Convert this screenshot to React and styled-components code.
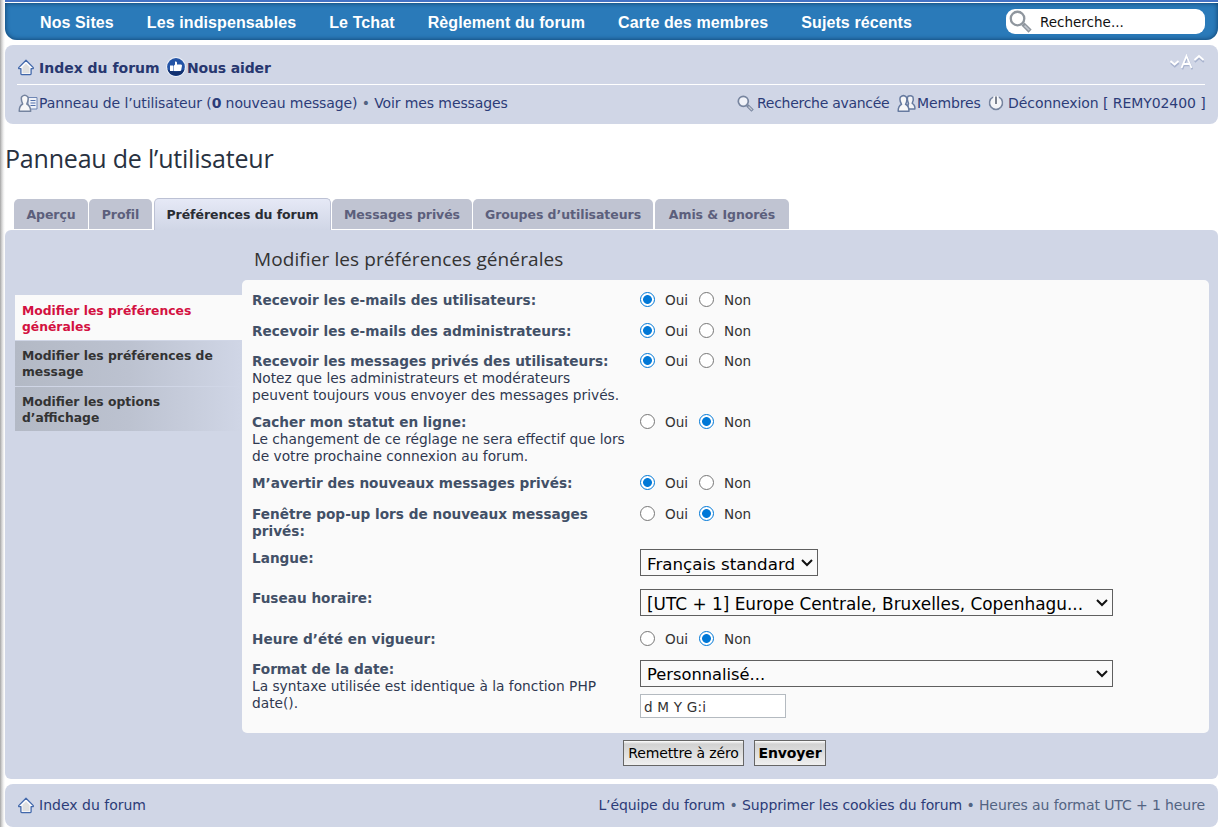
import React from 'react';
import styled, { createGlobalStyle } from 'styled-components';

const GlobalStyle = createGlobalStyle`
    * { box-sizing: border-box; }
    body {
        margin: 0;
        background: #fff;
        font-family: Verdana, "DejaVu Sans", sans-serif;
        font-size: 14px;
        color: #2f3a4a;
        overflow: hidden;
    }
    svg { flex: none; }
`;

const NAV = ['Nos Sites', 'Les indispensables', 'Le Tchat', 'Règlement du forum', 'Carte des membres', 'Sujets récents'];

const TABS = [
    { label: 'Aperçu', width: 74, gap: 1 },
    { label: 'Profil', width: 63, gap: 2 },
    { label: 'Préférences du forum', width: 177, gap: 1, active: true },
    { label: 'Messages privés', width: 140, gap: 1 },
    { label: 'Groupes d’utilisateurs', width: 180, gap: 2 },
    { label: 'Amis & Ignorés', width: 134, gap: 0 },
];

const MENU = [
    { lines: ['Modifier les préférences', 'générales'], active: true, height: 45 },
    { lines: ['Modifier les préférences de', 'message'], height: 45 },
    { lines: ['Modifier les options', 'd’affichage'], height: 44 },
];

const ROWS = [
    { title: ['Recevoir les e-mails des utilisateurs:'], value: 'oui', height: 31 },
    { title: ['Recevoir les e-mails des administrateurs:'], value: 'oui', height: 30 },
    {
        title: ['Recevoir les messages privés des utilisateurs:'],
        note: ['Notez que les administrateurs et modérateurs', 'peuvent toujours vous envoyer des messages privés.'],
        value: 'oui',
        height: 61,
    },
    {
        title: ['Cacher mon statut en ligne:'],
        note: ['Le changement de ce réglage ne sera effectif que lors', 'de votre prochaine connexion au forum.'],
        value: 'non',
        height: 61,
    },
    { title: ['M’avertir des nouveaux messages privés:'], value: 'oui', height: 31 },
    { title: ['Fenêtre pop-up lors de nouveaux messages', 'privés:'], value: 'non', height: 44 },
    { title: ['Langue:'], select: 'Français standard', width: 178, size: 16.7, height: 40 },
    {
        title: ['Fuseau horaire:'],
        select: '[UTC + 1] Europe Centrale, Bruxelles, Copenhagu...',
        width: 473,
        size: 16.9,
        height: 41,
    },
    { title: ['Heure d’été en vigueur:'], value: 'non', height: 30 },
    {
        title: ['Format de la date:'],
        note: ['La syntaxe utilisée est identique à la fonction PHP', 'date().'],
        select: 'Personnalisé...',
        width: 473,
        size: 16.3,
        input: 'd M Y G:i',
        height: 64,
    },
];

function HomeIcon() {
    return (
        <svg width="18" height="17" viewBox="0 0 18 17">
            <path d="M9 1.300 1.700 8.600v1h2.200v5.200q0 .8.8.8h8.600q.8 0 .8-.8V9.600h2.200v-1z" fill="#fbfbfd" stroke="#4268ab" strokeWidth="1.300" strokeLinejoin="round" />
            <path d="M9 4.500 5.500 8v6.200h7V8z" fill="#e0e0e0" />
        </svg>
    );
}

function ThumbIcon() {
    return (
        <svg width="20" height="20" viewBox="0 0 20 20">
            <circle cx="10" cy="10" r="9.900" fill="#eef2f9" />
            <circle cx="10" cy="10" r="8.900" fill="#2454a6" />
            <path d="M1.500 12.500a8.900 8.900 0 0 0 17 0q-8.500 4-17 0z" fill="#12306f" />
            <path d="M4 8.500h3V14H4zM7.500 9 9 7.500V4.500q1.600-.5 2 1v2h4q1.200.2 1 1.300l-.8 4.200q-.2 1-1.200 1H7.500z" fill="#fff" />
        </svg>
    );
}

function UserCardIcon() {
    return (
        <svg width="20" height="19" viewBox="0 0 20 19">
            <path d="M10 3.500h9V15h-9z" fill="#eef1f8" stroke="#6f86b4" />
            <path d="M12.500 6.500h5M12.500 9h5M12.500 11.500h5" stroke="#5472ab" strokeWidth="1.200" />
            <path d="M4.700 10Q2.500 5 3.800 2.700 6.700-.2 9.700 2.700 11 5 8.800 10q3.700 1.700 3.900 7.300H1.200Q1.200 11.700 4.700 10z" fill="#f7f7f8" stroke="#75849f" strokeWidth="1.500" strokeLinejoin="round" />
        </svg>
    );
}

function MembersIcon() {
    return (
        <svg width="19" height="19" viewBox="0 0 19 19">
            <path d="M11.500 9.500q-2-5-.5-7.200 3-1.300 5 .7 1 2.500-.8 6.300 3 1.700 2.700 5.700H10z" fill="#f3f4f7" stroke="#667a9f" strokeWidth="1.500" strokeLinejoin="round" />
            <path d="M4.500 10.300Q2 5.500 3.500 3 6.500.2 9.300 3q1.500 2.500-.7 7.300 3.400 1.500 3.400 7H1.200q-.2-5.300 3.300-7z" fill="#f7f7f8" stroke="#667a9f" strokeWidth="1.500" strokeLinejoin="round" />
        </svg>
    );
}

function SearchIcon({ size = 17, ring = '#77859f', lens = '#f1f3f9' }) {
    return (
        <svg width={size} height={size} viewBox="0 0 17 17">
            <path d="m10.300 10.300 5.300 5.300" stroke={ring} strokeWidth="3.200" />
            <path d="m11.500 11.500 3.500 3.500" stroke="#c3c8d0" strokeWidth="1.200" />
            <circle cx="6.300" cy="6.300" r="5" fill={lens} stroke={ring} strokeWidth="1.700" />
        </svg>
    );
}

function PowerIcon() {
    return (
        <svg width="16" height="16" viewBox="0 0 16 16">
            <path d="M5 2.200a6.500 6.500 0 1 0 6 0" fill="#f3f4f8" stroke="#76849f" strokeWidth="1.500" />
            <path d="M8 1v8.500" stroke="#f6f7fa" strokeWidth="4" />
            <path d="M8 1.500V9" stroke="#7b8290" strokeWidth="2" />
        </svg>
    );
}

function FontSizeIcon() {
    return (
        <svg width="36" height="18" viewBox="0 0 36 18">
            <g fill="none" strokeWidth="1.800">
                <path d="m1.500 8 4 3.500 4-3.500M25.500 7l4.500-4 4.500 4" stroke="#a9b4cf" transform="translate(.3 1)" />
                <path d="m1.500 7 4 3.500 4-3.500M25.500 6 30 2l4.500 4" stroke="#fff" />
                <path d="m12.500 14.500 5-12 5 12M14.300 10.500h6.500" stroke="#a9b4cf" transform="translate(.8 .8)" />
                <path d="m12.500 14 5-12 5 12M14.300 10h6.500" stroke="#fff" />
            </g>
        </svg>
    );
}

function Field({ row }) {
    return (
        <Row $height={row.height}>
            <Label>
                {row.title.map(t => <LabelTitle key={t}>{t}</LabelTitle>)}
                {row.note && row.note.map(t => <Note key={t}>{t}</Note>)}
            </Label>
            {row.select ? (
                <Controls>
                    <Select $width={row.width} $size={row.size}>
                        <span>{row.select}</span>
                        <svg width="12" height="8" viewBox="0 0 12 8">
                            <path d="m1 1 5 5 5-5" fill="none" stroke="#111" strokeWidth="2" />
                        </svg>
                    </Select>
                    {row.input && <DateInput defaultValue={row.input} />}
                </Controls>
            ) : (
                <Choices>
                    <Radio $on={row.value === 'oui'} />
                    <Choice $width={44}>Oui</Choice>
                    <Radio $on={row.value === 'non'} />
                    <Choice>Non</Choice>
                </Choices>
            )}
        </Row>
    );
}

function App() {
    return (
        <Page>
            <GlobalStyle />
            <Edge />
            <Content>
                <TopLine />
                <Header>
                    <Nav>
                        {NAV.map(item => <NavItem key={item}>{item}</NavItem>)}
                    </Nav>
                    <SearchBox>
                        <SearchIcon size={23} ring="#8f969e" lens="#fff" />
                        <SearchInput defaultValue="Recherche..." />
                    </SearchBox>
                </Header>
                <NavBar>
                    <Crumbs>
                        <HomeIcon />
                        <CrumbLink $width={131}>Index du forum</CrumbLink>
                        <ThumbIcon />
                        <CrumbLink>Nous aider</CrumbLink>
                        <Spacer />
                        <FontSizeWrap>
                            <FontSizeIcon />
                        </FontSizeWrap>
                    </Crumbs>
                    <UserLinks>
                        <UserCardIcon />
                        <UserLink>Panneau de l’utilisateur (<b>0</b> nouveau message) <Dot>•</Dot> Voir mes messages</UserLink>
                        <Spacer />
                        <SearchIcon />
                        <RightLink $left={3} $width={143} $tracking={-0.28}>Recherche avancée</RightLink>
                        <MembersIcon />
                        <RightLink $left={1} $width={72} $tracking={-0.12}>Membres</RightLink>
                        <PowerIcon />
                        <RightLink $left={4} $width={201} $tracking={-0.07}>Déconnexion [ REMY02400 ]</RightLink>
                    </UserLinks>
                </NavBar>
                <PageTitle>Panneau de l’utilisateur</PageTitle>
                <Tabs>
                    {TABS.map(tab => (
                        <Tab key={tab.label} $active={tab.active} $width={tab.width} $gap={tab.gap}>{tab.label}</Tab>
                    ))}
                </Tabs>
                <Panel>
                    <Menu>
                        {MENU.map(item => (
                            <MenuItem key={item.lines[0]} $active={item.active} $height={item.height}>
                                {item.lines.map(line => <div key={line}>{line}</div>)}
                            </MenuItem>
                        ))}
                    </Menu>
                    <Main>
                        <SectionTitle>Modifier les préférences générales</SectionTitle>
                        <Fieldset>
                            {ROWS.map(row => <Field key={row.title[0]} row={row} />)}
                        </Fieldset>
                        <Buttons>
                            <Button $width={121}>Remettre à zéro</Button>
                            <SubmitButton $width={72}>Envoyer</SubmitButton>
                        </Buttons>
                    </Main>
                </Panel>
                <Footer>
                    <HomeIcon />
                    <FooterLink>Index du forum</FooterLink>
                    <Spacer />
                    <FooterInfo>L’équipe du forum <Dot>•</Dot> Supprimer les cookies du forum <Dot>• Heures au format UTC + 1 heure</Dot></FooterInfo>
                </Footer>
            </Content>
        </Page>
    );
}

export default App;

const Page = styled.div`
    display: flex;
    width: 1219px;
    height: 827px;
    overflow: hidden;
`;
const Edge = styled.div`
    width: 5px;
    background: linear-gradient(90deg, #a3a3a3, #d2d2d2 35%, #f4f4f4 75%, #fff);
`;
const Content = styled.div`
    width: 1213px;
    display: flex;
    flex-direction: column;
`;
const TopLine = styled.div`
    height: 2px;
    flex: none;
    background: #4472c4;
    margin-bottom: 1px;
`;
const Header = styled.div`
    height: 37px;
    flex: none;
    display: flex;
    align-items: center;
    justify-content: space-between;
    padding: 0 13px 0 35px;
    border-radius: 0 0 12px 12px;
    background: #2a7ab9;
    box-shadow: inset 0 0 5px #0d3b66;
`;
const Nav = styled.div`
    display: flex;
    gap: 33px;
    padding-top: 2px;
`;
const NavItem = styled.div`
    font: bold 16px/20px "Liberation Sans", Arial, sans-serif;
    letter-spacing: 0.1px;
    color: #fff;
    white-space: nowrap;
`;
const SearchBox = styled.div`
    width: 199px;
    height: 25px;
    display: flex;
    align-items: center;
    padding-left: 3px;
    border-radius: 9px;
    background: #fff;
`;
const SearchInput = styled.input`
    width: 150px;
    margin-left: 8px;
    padding: 0;
    border: 0;
    outline: 0;
    background: none;
    font: 13.5px "DejaVu Sans", sans-serif;
    color: #111;
`;
const NavBar = styled.div`
    height: 79px;
    flex: none;
    margin-top: 5px;
    padding: 5px 13px 0 12px;
    border-radius: 8px;
    background: #d0d6e6;
`;
const Crumbs = styled.div`
    height: 35px;
    display: flex;
    align-items: center;
    border-bottom: 1px solid #fff;
`;
const CrumbLink = styled.span`
    width: ${props => props.$width ? `${props.$width}px` : 'auto'};
    padding: 2px 0 0 ${props => props.$width ? 4 : 1}px;
    font-size: 14px;
    font-weight: bold;
    letter-spacing: ${props => props.$width ? 0 : -0.15}px;
    color: #27376f;
    white-space: nowrap;
`;
const FontSizeWrap = styled.div`
    height: 27px;
`;
const Spacer = styled.div`
    flex: 1;
`;
const UserLinks = styled.div`
    height: 36px;
    display: flex;
    align-items: center;
    padding-left: 1px;
`;
const Link = styled.span`
    font-size: 14px;
    color: #2c3c78;
    white-space: nowrap;
`;
const UserLink = styled(Link)`
    padding-left: 1px;
    letter-spacing: -0.11px;
`;
const RightLink = styled(Link)`
    width: ${props => props.$width}px;
    padding-left: ${props => props.$left}px;
    letter-spacing: ${props => props.$tracking}px;
`;
const FooterLink = styled(Link)`
    padding-left: 4px;
`;
const FooterInfo = styled(Link)`
    letter-spacing: -0.1px;
`;
const Dot = styled.span`
    color: #536482;
`;
const PageTitle = styled.h2`
    height: 75px;
    flex: none;
    margin: 0;
    padding-top: 17px;
    font: 25px/34px "Open Sans", sans-serif;
    letter-spacing: -0.2px;
    color: #28313f;
`;
const Tabs = styled.div`
    height: 31px;
    flex: none;
    display: flex;
    align-items: flex-start;
    padding-left: 9px;
`;
const Tab = styled.div`
    width: ${props => props.$width}px;
    height: ${props => props.$active ? 32 : 30}px;
    margin-top: ${props => props.$active ? -1 : 0}px;
    margin-right: ${props => props.$gap}px;
    border-radius: 5px 5px 0 0;
    border: ${props => props.$active ? '1px solid #bcc1d4' : '0'};
    border-bottom: 0;
    background: ${props => props.$active ? 'linear-gradient(#e6e9f6, #d0d6e6)' : '#c0c4d2'};
    color: ${props => props.$active ? '#292c33' : '#5c5f7c'};
    font-size: 12.500px;
    font-weight: bold;
    letter-spacing: -0.06px;
    line-height: ${props => props.$active ? 32 : 31}px;
    text-align: center;
    white-space: nowrap;
`;
const Panel = styled.div`
    height: 549px;
    flex: none;
    display: flex;
    border-radius: 6px;
    background: #d0d6e6;
`;
const Menu = styled.div`
    width: 237px;
    padding: 65px 0 0 10px;
`;
const MenuItem = styled.div`
    height: ${props => props.$height}px;
    margin-bottom: 1px;
    padding: ${props => props.$active ? 8 : 7}px 0 0 7px;
    background: ${props => props.$active ? '#fafafa' : 'linear-gradient(90deg, #b3b9c5, #bcc2d0 50%, #d0d6e6)'};
    color: ${props => props.$active ? '#d31141' : '#333'};
    font-size: 12.350px;
    font-weight: bold;
    line-height: 16px;
    white-space: nowrap;
`;
const Main = styled.div`
    width: 967px;
`;
const SectionTitle = styled.h3`
    height: 50px;
    margin: 0;
    padding: 16px 0 0 12px;
    font: 19px/26px "Open Sans", sans-serif;
    letter-spacing: 0.1px;
    color: #333;
`;
const Fieldset = styled.div`
    height: 453px;
    padding: 11px 0 0 10px;
    border-radius: 5px;
    background: #fafafa;
`;
const Row = styled.div`
    height: ${props => props.$height}px;
    display: flex;
    align-items: flex-start;
`;
const Label = styled.div`
    width: 388px;
    padding-top: 1px;
    line-height: 17px;
    white-space: nowrap;
`;
const LabelTitle = styled.div`
    font-weight: bold;
    font-size: 13.650px;
    color: #425067;
`;
const Note = styled.div`
    font-size: 13.750px;
    color: #2f3850;
`;
const Choices = styled.div`
    display: flex;
    align-items: flex-start;
`;
const Radio = styled.span`
    width: 15px;
    height: 15px;
    margin-top: 1px;
    border: 1px solid ${props => props.$on ? '#0078d7' : '#767676'};
    border-radius: 50%;
    background: ${props => props.$on ? 'radial-gradient(circle, #0078d7 4px, #fff 4.800px)' : '#fff'};
`;
const Choice = styled.span`
    width: ${props => props.$width ? `${props.$width}px` : 'auto'};
    padding-left: 10px;
    font-size: 13.600px;
    line-height: 18px;
    color: #333;
`;
const Controls = styled.div`
    display: flex;
    flex-direction: column;
    gap: 7px;
`;
const Select = styled.div`
    width: ${props => props.$width}px;
    height: 27px;
    display: flex;
    align-items: center;
    justify-content: space-between;
    padding: 0 4px 0 6px;
    border: 1px solid #5f5f5f;
    background: #fafafa;
    color: #000;
    font-size: ${props => props.$size}px;
    white-space: nowrap;

    span {
        padding-top: 2px;
    }
`;
const DateInput = styled.input`
    width: 146px;
    height: 24px;
    padding: 1px 3px 0;
    border: 1px solid #b4bac0;
    background: #fff;
    font: 13.600px "DejaVu Sans", sans-serif;
    letter-spacing: 0.2px;
    color: #333;
`;
const Buttons = styled.div`
    display: flex;
    gap: 10px;
    padding: 7px 0 0 381px;
`;
const Button = styled.button`
    width: ${props => props.$width}px;
    height: 26px;
    padding: 0;
    border: 1px solid #666;
    background: linear-gradient(#fff 0, #d2d2d2 3px, #efefef);
    font: 14px "DejaVu Sans", sans-serif;
    letter-spacing: -0.12px;
    color: #000;
    white-space: nowrap;
`;
const SubmitButton = styled(Button)`
    font-weight: bold;
`;
const Footer = styled.div`
    height: 43px;
    flex: none;
    display: flex;
    align-items: center;
    margin-top: 5px;
    padding: 0 13px 1px 12px;
    border-radius: 8px;
    background: #d0d6e6;
`;
